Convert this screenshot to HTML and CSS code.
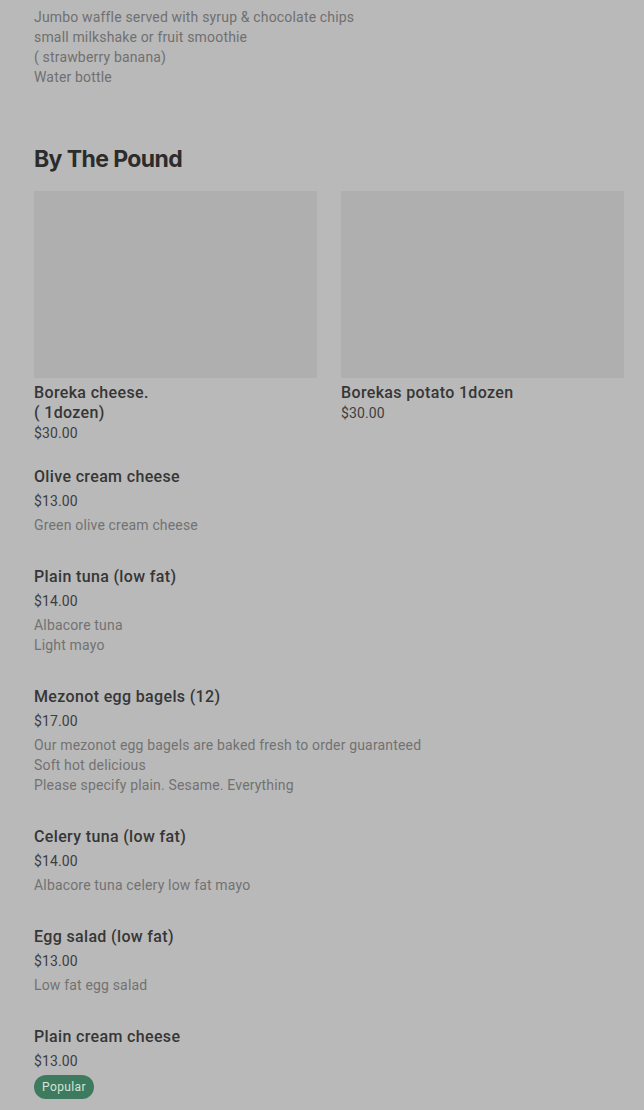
FILE: index.html
```html
<!DOCTYPE html>
<html>
<head>
<meta charset="utf-8">
<link rel="stylesheet" href="styles.css">
</head>
<body>
<div class="page">
  <div class="prev-desc">
    <div>Jumbo waffle served with syrup &amp; chocolate chips</div>
    <div>small milkshake or fruit smoothie</div>
    <div>( strawberry banana)</div>
    <div>Water bottle</div>
  </div>

  <h2 class="section-title">By The Pound</h2>

  <div class="grid">
    <div class="card">
      <div class="thumb"></div>
      <div class="name">Boreka cheese.<br>( 1dozen)</div>
      <div class="price">$30.00</div>
    </div>
    <div class="card">
      <div class="thumb"></div>
      <div class="name">Borekas potato 1dozen</div>
      <div class="price">$30.00</div>
    </div>
  </div>

  <div class="list">
    <div class="item">
      <div class="name">Olive cream cheese</div>
      <div class="price">$13.00</div>
      <div class="desc">Green olive cream cheese</div>
    </div>
    <div class="item">
      <div class="name">Plain tuna (low fat)</div>
      <div class="price">$14.00</div>
      <div class="desc">Albacore tuna<br>Light mayo</div>
    </div>
    <div class="item">
      <div class="name">Mezonot egg bagels (12)</div>
      <div class="price">$17.00</div>
      <div class="desc">Our mezonot egg bagels are baked fresh to order guaranteed<br>Soft hot delicious<br>Please specify plain. Sesame. Everything</div>
    </div>
    <div class="item">
      <div class="name">Celery tuna (low fat)</div>
      <div class="price">$14.00</div>
      <div class="desc">Albacore tuna celery low fat mayo</div>
    </div>
    <div class="item">
      <div class="name">Egg salad (low fat)</div>
      <div class="price">$13.00</div>
      <div class="desc">Low fat egg salad</div>
    </div>
    <div class="item">
      <div class="name">Plain cream cheese</div>
      <div class="price">$13.00</div>
      <div class="badge">Popular</div>
    </div>
  </div>
</div>
</body>
</html>
```

FILE: styles.css
```css
html, body {
  margin: 0;
  padding: 0;
  background: #b9b9b9;
}
body {
  font-family: Roboto, "Liberation Sans", sans-serif;
  overflow: hidden;
  height: 1110px;
}
.page {
  padding: 7px 20px 0 34px;
}
.prev-desc {
  font-size: 14px;
  line-height: 20px;
  color: #707070;
  letter-spacing: 0.17px;
}
.section-title {
  margin: 56px 0 16px;
  font-family: Inter, "Liberation Sans", sans-serif;
  font-size: 23px;
  line-height: 32px;
  font-weight: 700;
  color: #2c2c2c;
  letter-spacing: -0.6px;
}
.grid {
  display: grid;
  grid-template-columns: 283px 283px;
  column-gap: 24px;
}
.thumb {
  height: 187px;
  background: #afafaf;
  margin-bottom: 5px;
}
.name {
  font-size: 16px;
  line-height: 20px;
  font-weight: 500;
  color: #363636;
  letter-spacing: 0.35px;
}
.price {
  font-size: 14px;
  line-height: 20px;
  color: #3e3e3e;
  letter-spacing: 0.1px;
}
.list {
  display: flex;
  flex-direction: column;
  gap: 32px;
  margin-top: 24px;
}
.item .price {
  margin-top: 4px;
}
.desc {
  margin-top: 4px;
  font-size: 14px;
  line-height: 20px;
  color: #727272;
  letter-spacing: 0.17px;
}
.badge {
  display: inline-block;
  margin-top: 4px;
  padding: 0 8px;
  height: 24px;
  line-height: 24px;
  border-radius: 12px;
  background: #3e7b5e;
  color: #d3e4da;
  font-size: 12px;
  letter-spacing: 0.4px;
}
```
